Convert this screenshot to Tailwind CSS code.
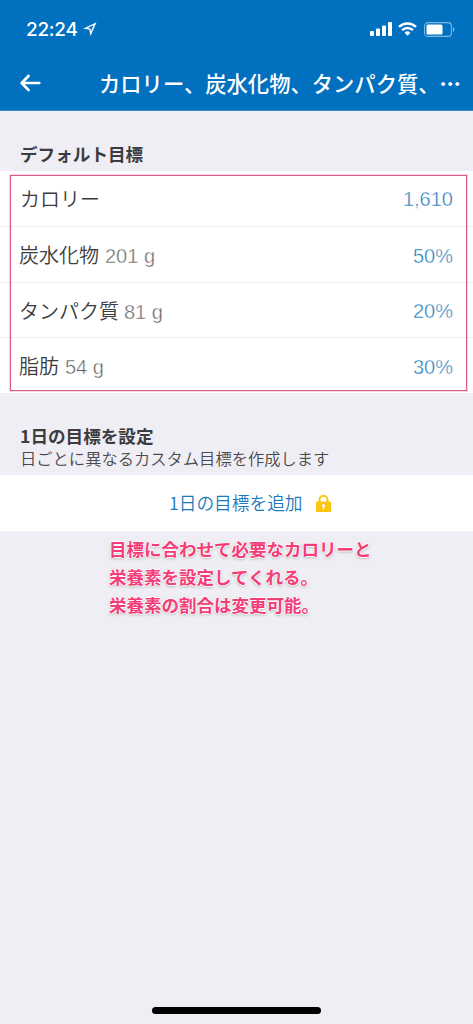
<!DOCTYPE html>
<html lang="ja">
<head>
<meta charset="utf-8">
<meta name="viewport" content="width=device-width, initial-scale=1">
<title>目標</title>
<script src="https://cdn.jsdelivr.net/npm/@tailwindcss/browser@4"></script>
</head>
<body class="h-[1024px] overflow-hidden bg-[#efeef4] text-[#3c3c40] font-['Noto_Sans_CJK_JP',sans-serif]">
<div class="flex h-[1024px] w-[473px] flex-col">
  <header class="h-[111px] shrink-0 border-b border-[#3a8cc8] bg-[#0070bf] text-white">
    <div class="flex h-[58px] items-center pl-[26px] pr-[18px]">
      <span class="font-['Inter',sans-serif] text-[19px] font-medium leading-none tracking-[-0.3px]">22:24</span>
      <svg class="ml-[5px] h-[14px] w-[14px]" viewBox="0 0 14 14" fill="#fff"><path fill-rule="evenodd" d="M13.500.3 0 6.700 6.200 7.600 7.500 13.900ZM10.600 2.900 8 9.200 7.400 6.400 4.700 5.900Z"/></svg>
      <svg class="ml-auto h-[14px] w-[22px]" viewBox="0 0 22 14" fill="#fff"><rect x="0" y="9" width="4" height="5" rx="1"/><rect x="6" y="6.5" width="4" height="7.5" rx="1"/><rect x="12" y="3.5" width="4" height="10.5" rx="1"/><rect x="18" y="0" width="4" height="14" rx="1"/></svg>
      <svg class="ml-[6px] h-[14px] w-[19px]" viewBox="0 0 19 14" fill="none" stroke="#fff" stroke-width="2.5"><path d="M1 4.9a12.2 12.2 0 0 1 17 0"/><path d="M4.1 8.2a7.8 7.8 0 0 1 10.8 0"/><path d="M6.600 10.700a4.200 4.200 0 0 1 5.800 0L9.500 13.700Z" fill="#fff" stroke="none"/></svg>
      <svg class="ml-[7px] h-[15px] w-[31px]" viewBox="0 0 31 15"><rect x=".6" y=".6" width="26.800" height="13.800" rx="3.500" fill="none" stroke="#7fb7df" stroke-width="1.100"/><rect x="2.500" y="2.500" width="16" height="10" rx="1.500" fill="#fff"/><path d="M29 5c2 .8 2 4.200 0 5Z" fill="#7fb7df"/></svg>
    </div>
    <div class="flex h-[50px] items-center pl-[20px]">
      <svg class="h-[18px] w-[21px]" viewBox="0 0 21 18" fill="none" stroke="#fff" stroke-width="2.700" stroke-linecap="round" stroke-linejoin="round"><path d="M19.300 9H2M8.500 2 1.700 9 8.500 16"/></svg>
      <h1 class="ml-[58px] whitespace-nowrap text-[21.3px] font-medium leading-none">カロリー、炭水化物、タンパク質、<span class="font-black">…</span></h1>
    </div>
  </header>

  <main class="flex flex-col">
    <h2 class="h-[60px] pl-[20px] pt-[29px] text-[17.6px] font-bold leading-[28px]">デフォルト目標</h2>
    <div class="relative flex h-[222px] flex-col bg-white text-[20px] font-[350] leading-none">
      <div class="flex h-[56px] items-center justify-between border-b border-[#efeff1] pl-[20px] pr-[20px] pt-px">
        <span>カロリー</span><span class="font-['Liberation_Sans',sans-serif] text-[#1474b8] [-webkit-text-stroke:0.45px_#fff]">1,610</span>
      </div>
      <div class="flex h-[56px] items-center justify-between border-b border-[#efeff1] pl-[19px] pr-[20px] pt-[2px]">
        <span>炭水化物<span class="ml-[6px] font-['Liberation_Sans',sans-serif] text-[#5e5e62] [-webkit-text-stroke:0.45px_#fff]">201 g</span></span><span class="font-['Liberation_Sans',sans-serif] text-[#1474b8] [-webkit-text-stroke:0.45px_#fff]">50%</span>
      </div>
      <div class="flex h-[55px] items-center justify-between border-b border-[#efeff1] pl-[19px] pr-[20px] pt-[2px]">
        <span>タンパク質<span class="ml-[5px] font-['Liberation_Sans',sans-serif] text-[#5e5e62] [-webkit-text-stroke:0.45px_#fff]">81 g</span></span><span class="font-['Liberation_Sans',sans-serif] text-[#1474b8] [-webkit-text-stroke:0.45px_#fff]">20%</span>
      </div>
      <div class="flex h-[55px] items-center justify-between pl-[19px] pr-[20px] pt-[2px]">
        <span>脂肪<span class="ml-[6px] font-['Liberation_Sans',sans-serif] text-[#5e5e62] [-webkit-text-stroke:0.45px_#fff]">54 g</span></span><span class="font-['Liberation_Sans',sans-serif] text-[#1474b8] [-webkit-text-stroke:0.45px_#fff]">30%</span>
      </div>
      <div class="absolute left-[10px] top-[4px] h-[216px] w-[457px] border border-[#dc5a88] outline outline-[#dc5a88]/25"></div>
    </div>
    <div class="h-[82px] pl-[20px] pt-[31px]">
      <h2 class="text-[17.6px] font-bold leading-[24px]">1日の目標を設定</h2>
      <p class="text-[16.3px] font-[350] leading-[20px] text-[#4a4a4e]">日ごとに異なるカスタム目標を作成します</p>
    </div>
    <div class="flex h-[56px] items-center bg-white pl-[169px] text-[17.7px] font-[350] leading-none text-[#1a7abd]">
      <span>1日の目標を追加</span>
      <svg class="ml-[13px] h-[17px] w-[15px]" viewBox="0 0 15 17"><path d="M3.500 8V4.800a4 4 0 0 1 8 0V8" fill="none" stroke="#fdc513" stroke-width="2"/><rect x="0" y="6.500" width="15" height="10.500" rx="1" fill="#fdc513"/><path d="M7.500 9.300a1.500 1.500 0 0 1 .8 2.800l-.2 2.200H6.900l-.2-2.200a1.500 1.500 0 0 1 .8-2.800Z" fill="#fff"/></svg>
    </div>
    <p class="pl-[109px] pt-[4px] text-[17.5px] font-bold leading-[28px] text-[#f23d78] [text-shadow:1px_0_1px_#fff,-1px_0_1px_#fff,0_-1px_1px_#fff,0_1px_1px_#fff,0_1px_3px_#888]">目標に合わせて必要なカロリーと<br>栄養素を設定してくれる。<br>栄養素の割合は変更可能。</p>
  </main>
  <div class="mb-[10px] ml-[152px] mt-auto h-[7px] w-[169px] shrink-0 rounded-full bg-black"></div>
</div>
</body>
</html>
